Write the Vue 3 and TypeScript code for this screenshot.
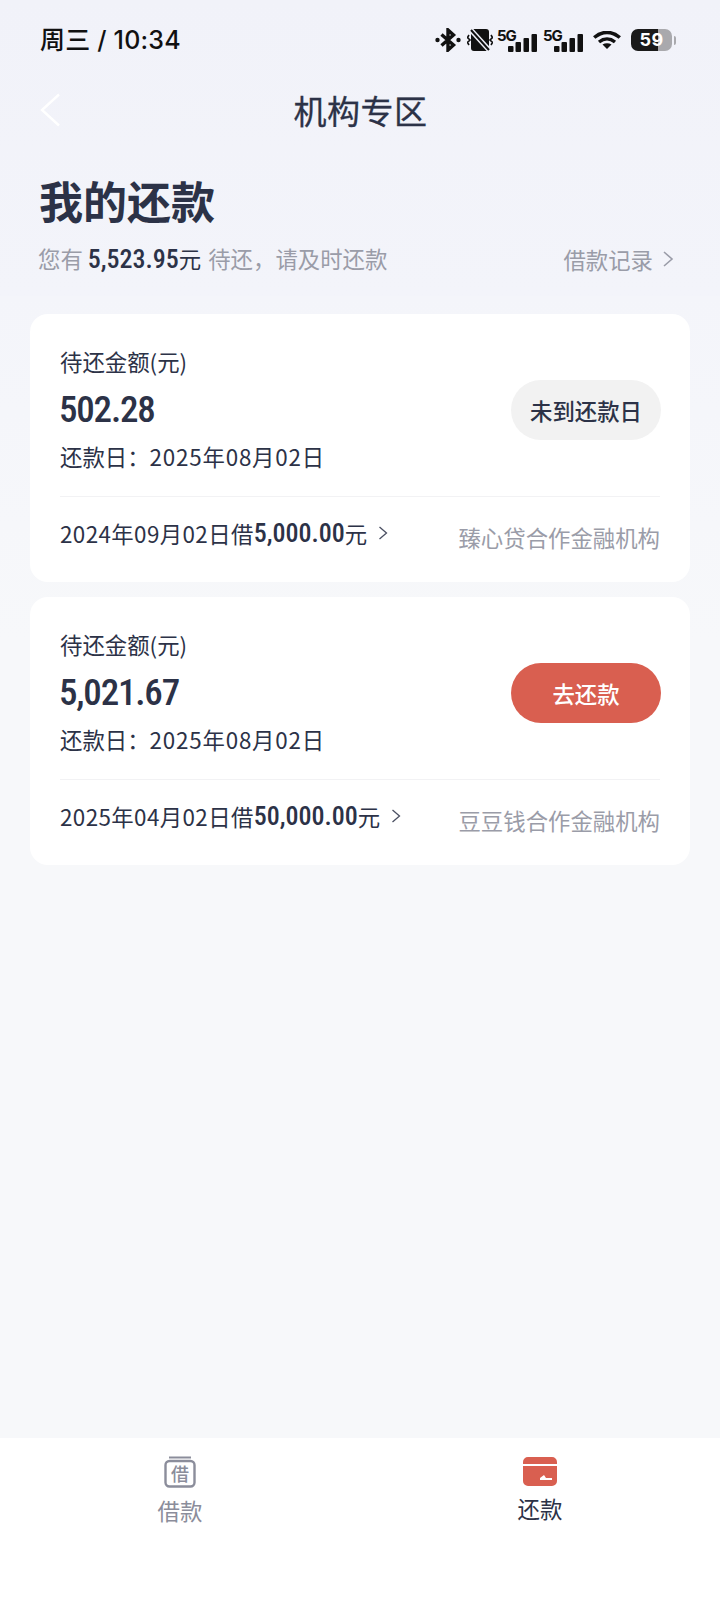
<template>
  <div class="page">
    <div class="hero">
      <div class="status">
        <span class="time">周三 / 10:34</span>
        <div class="status-icons">
          <svg width="26" height="24" viewBox="0 0 26 24"><circle cx="2.500" cy="12" r="2.200" fill="#111"/><circle cx="23.500" cy="12" r="2.200" fill="#111"/><path d="M6.500 6.500l12 10.500-5.500 5V2l5.500 5-12 10.500" fill="none" stroke="#111" stroke-width="3.400"/></svg>
          <svg class="vibrate" width="26" height="24" viewBox="0 0 26 24"><rect x="4" y="1" width="18" height="22" rx="3" fill="#111"/><path d="M3 1l20 22" stroke="#f1f2f9" stroke-width="5"/><path d="M4 2l18 20" stroke="#111" stroke-width="2"/><path d="M2 7L0.500 9.500 3 12 0.500 14.500 2 17M24 7l1.500 2.500L23 12l2.500 2.500L24 17" fill="none" stroke="#111" stroke-width="1.600"/></svg>
          <div class="signal" v-for="n in 2" :key="n">
            <span class="five-g">5G</span>
            <svg width="29" height="18" viewBox="0 0 29 18"><rect x="0" y="12" width="5.500" height="6" rx="1" fill="#111"/><rect x="7.500" y="8" width="5.500" height="10" rx="1" fill="#111"/><rect x="15.500" y="4" width="5.500" height="14" rx="1" fill="#111"/><rect x="23.500" y="0" width="5.500" height="18" rx="1" fill="#111"/></svg>
          </div>
          <svg class="wifi" width="28" height="18" viewBox="0 0 28 18"><path d="M1.200 6.500C9 -0.300 19 -0.300 26.800 6.500M6 11c5-4 11-4 16 0" fill="none" stroke="#111" stroke-width="3.500"/><path d="M9.500 13.500c2.800-1.600 6.200-1.600 9 0L14 18z" fill="#111"/></svg>
          <div class="battery">
            <div class="battery-body"><span>59</span></div>
            <i class="battery-tip"></i>
          </div>
        </div>
      </div>
      <div class="nav">
        <svg class="back" width="22" height="34" viewBox="0 0 22 34"><path d="M20 1.500L3 17l17 15.500" fill="none" stroke="#fff" stroke-width="2.400"/></svg>
        <span class="nav-title">机构专区</span>
      </div>
      <h1 class="heading">我的还款</h1>
      <div class="summary">
        <div class="summary-text">您有 <b>5,523.95</b><em>元</em> <span>待还，请及时还款</span></div>
        <div class="records">借款记录
          <svg width="12" height="18" viewBox="0 0 12 18"><path d="M2 2l8 7-8 7" fill="none" stroke="#9a9ca8" stroke-width="1.600"/></svg>
        </div>
      </div>
    </div>

    <div class="list">
      <div class="card" v-for="item in loans" :key="item.org">
        <div class="card-top">
          <div class="card-info">
            <div class="label">待还金额(元)</div>
            <div class="amount">{{ item.amount }}</div>
            <div class="label due">还款日：<span>2025年08月02日</span></div>
          </div>
          <div class="action" :class="{ pay: item.canPay }">{{ item.action }}</div>
        </div>
        <div class="card-bottom">
          <div class="loan">
            <span>{{ item.date }}借</span><b>{{ item.principal }}</b>元
            <svg width="10" height="16" viewBox="0 0 10 16"><path d="M1.500 2l7 6-7 6" fill="none" stroke="#4a4f62" stroke-width="1.300"/></svg>
          </div>
          <div class="org">{{ item.org }}</div>
        </div>
      </div>
    </div>

    <div class="tabbar">
      <div class="tab">
        <svg width="32" height="32" viewBox="0 0 32 32">
          <path d="M5 1.500h22" stroke="#8b8d9b" stroke-width="2"/>
          <rect x="1.500" y="5" width="29" height="25.500" rx="4" fill="none" stroke="#8b8d9b" stroke-width="2.400"/>
          <text x="16" y="24.500" text-anchor="middle" class="icon-text">借</text>
        </svg>
        <span>借款</span>
      </div>
      <div class="tab active">
        <svg width="34" height="30" viewBox="0 0 34 30">
          <path d="M0 6a5 5 0 0 1 5-5h24a5 5 0 0 1 5 5v2H0zM0 10h34v15a5 5 0 0 1-5 5H5a5 5 0 0 1-5-5z" fill="#d95f50"/>
          <path d="M17 22l4-3 2 3h6v2H17z" fill="#fff"/>
        </svg>
        <span>还款</span>
      </div>
    </div>
  </div>
</template>

<script setup lang="ts">
interface Loan {
  amount: string
  date: string
  principal: string
  org: string
  action: string
  canPay: boolean
}

const loans: Loan[] = [
  { amount: '502.28', date: '2024年09月02日', principal: '5,000.00', org: '臻心贷合作金融机构', action: '未到还款日', canPay: false },
  { amount: '5,021.67', date: '2025年04月02日', principal: '50,000.00', org: '豆豆钱合作金融机构', action: '去还款', canPay: true }
]
</script>

<style>
body {
  margin: 0;
}
</style>

<style scoped>
.page {
  width: 720px;
  height: 1600px;
  display: flex;
  flex-direction: column;
  background: linear-gradient(180deg, #f4f5fa 296px, #f7f8fa 640px);
  font-family: "Noto Sans CJK SC", "Noto Sans", sans-serif;
  color: #2c3247;
  overflow: hidden;
}

.hero {
  height: 296px;
  padding: 0 38px 0 39px;
  box-sizing: border-box;
  background: linear-gradient(180deg, #f1f2f9 0%, #f3f4fa 100%);
  flex-shrink: 0;
}

.status {
  height: 80px;
  display: flex;
  align-items: center;
  justify-content: space-between;
}

.time {
  margin: -4px 0 0 1px;
  font-size: 25px;
  font-weight: 500;
  letter-spacing: 0.200px;
  color: #111;
  font-family: Inter, "Noto Sans CJK SC", sans-serif;
}

.status-icons {
  display: flex;
  align-items: center;
  gap: 6px;
  margin-right: 6px;
}

.vibrate {
  margin-right: -2px;
}

.signal {
  height: 23px;
  width: 40px;
  display: flex;
  align-items: flex-end;
}

.five-g {
  width: 19px;
  margin-right: -8px;
  align-self: flex-start;
  font: 700 15px/13px Inter, sans-serif;
  letter-spacing: -1px;
  color: #111;
}

.wifi {
  margin-left: 4px;
}

.battery {
  display: flex;
  align-items: center;
  gap: 2px;
  margin-left: 4px;
}

.battery-body {
  width: 41px;
  height: 22px;
  border-radius: 7px;
  background: linear-gradient(90deg, #1a1a1a 0 67%, #a9a9ad 67% 100%);
  color: #fff;
  font: 700 18px/22px Inter, sans-serif;
  letter-spacing: 0.500px;
  text-align: center;
}

.battery-tip {
  width: 2px;
  height: 9px;
  border-radius: 0 2px 2px 0;
  background: #a9a9ad;
}

.nav {
  height: 60px;
  display: flex;
  align-items: center;
  justify-content: center;
  position: relative;
}

.back {
  position: absolute;
  left: 0;
  top: 13px;
}

.nav-title {
  font-size: 33px;
  font-weight: 400;
  letter-spacing: 0.500px;
  -webkit-text-stroke: 0.300px #2c3247;
}

.heading {
  margin: 28px 0 0;
  font-size: 44px;
  line-height: 64px;
  font-weight: 700;
}

.summary {
  margin-top: 9px;
  display: flex;
  align-items: center;
  justify-content: space-between;
  font-size: 22.400px;
  line-height: 34px;
  color: #9a9ca8;
}

.summary-text {
  margin-left: -1px;
}

.summary-text b {
  font: 500 26px/34px "Roboto Condensed", Roboto, sans-serif;
  color: #2c3247;
}

.summary-text em {
  font-style: normal;
  color: #2c3247;
}

.summary-text span {
  margin-left: 2px;
}

.records {
  display: flex;
  align-items: center;
  gap: 9px;
  margin-right: 8px;
}

.list {
  padding: 18px 30px 0;
  display: flex;
  flex-direction: column;
  gap: 15px;
}

.card {
  height: 268px;
  box-sizing: border-box;
  padding: 30px 30px 0;
  background: #fff;
  border-radius: 18px;
}

.card-top {
  height: 152px;
  display: flex;
  align-items: center;
  justify-content: space-between;
  border-bottom: 1px solid #f2f2f4;
}

.card-info {
  align-self: flex-start;
}

.label {
  font-size: 22.400px;
  line-height: 34px;
}

.amount {
  margin: 6px 0 -2px -1px;
  font: 500 37px/52px "Roboto Condensed", Roboto, sans-serif;
  letter-spacing: -1.200px;
}

.due {
  margin-top: 5px;
}

.due span {
  letter-spacing: 0.800px;
}

.action {
  width: 150px;
  height: 60px;
  margin: -20px -1px 0 0;
  border-radius: 30px;
  background: #f2f2f2;
  font-size: 22.400px;
  font-weight: 500;
  line-height: 60px;
  text-align: center;
}

.action.pay {
  background: #d95f50;
  color: #fff;
}

.card-bottom {
  margin-top: 17px;
  display: flex;
  justify-content: space-between;
  align-items: flex-start;
}

.loan {
  display: flex;
  align-items: center;
  white-space: pre-wrap;
  font-size: 22.400px;
  line-height: 38px;
}

.loan span {
  letter-spacing: 0.400px;
}

.loan b {
  font: 500 26px/38px "Roboto Condensed", Roboto, sans-serif;
}

.loan svg {
  margin-left: 6px;
}

.org {
  margin-top: 5px;
  font-size: 22.400px;
  line-height: 36px;
  color: #9a9ca8;
}

.tabbar {
  margin-top: auto;
  height: 162px;
  padding-top: 18px;
  box-sizing: border-box;
  background: #fff;
  display: flex;
  align-items: flex-start;
  flex-shrink: 0;
}

.tab {
  width: 360px;
  display: flex;
  flex-direction: column;
  align-items: center;
  gap: 5px;
  font-size: 22.400px;
  line-height: 34px;
  color: #8b8d9b;
}

.tab.active {
  color: #2c3247;
}

.icon-text {
  font-size: 18px;
  font-weight: 500;
  fill: #8b8d9b;
}
</style>
